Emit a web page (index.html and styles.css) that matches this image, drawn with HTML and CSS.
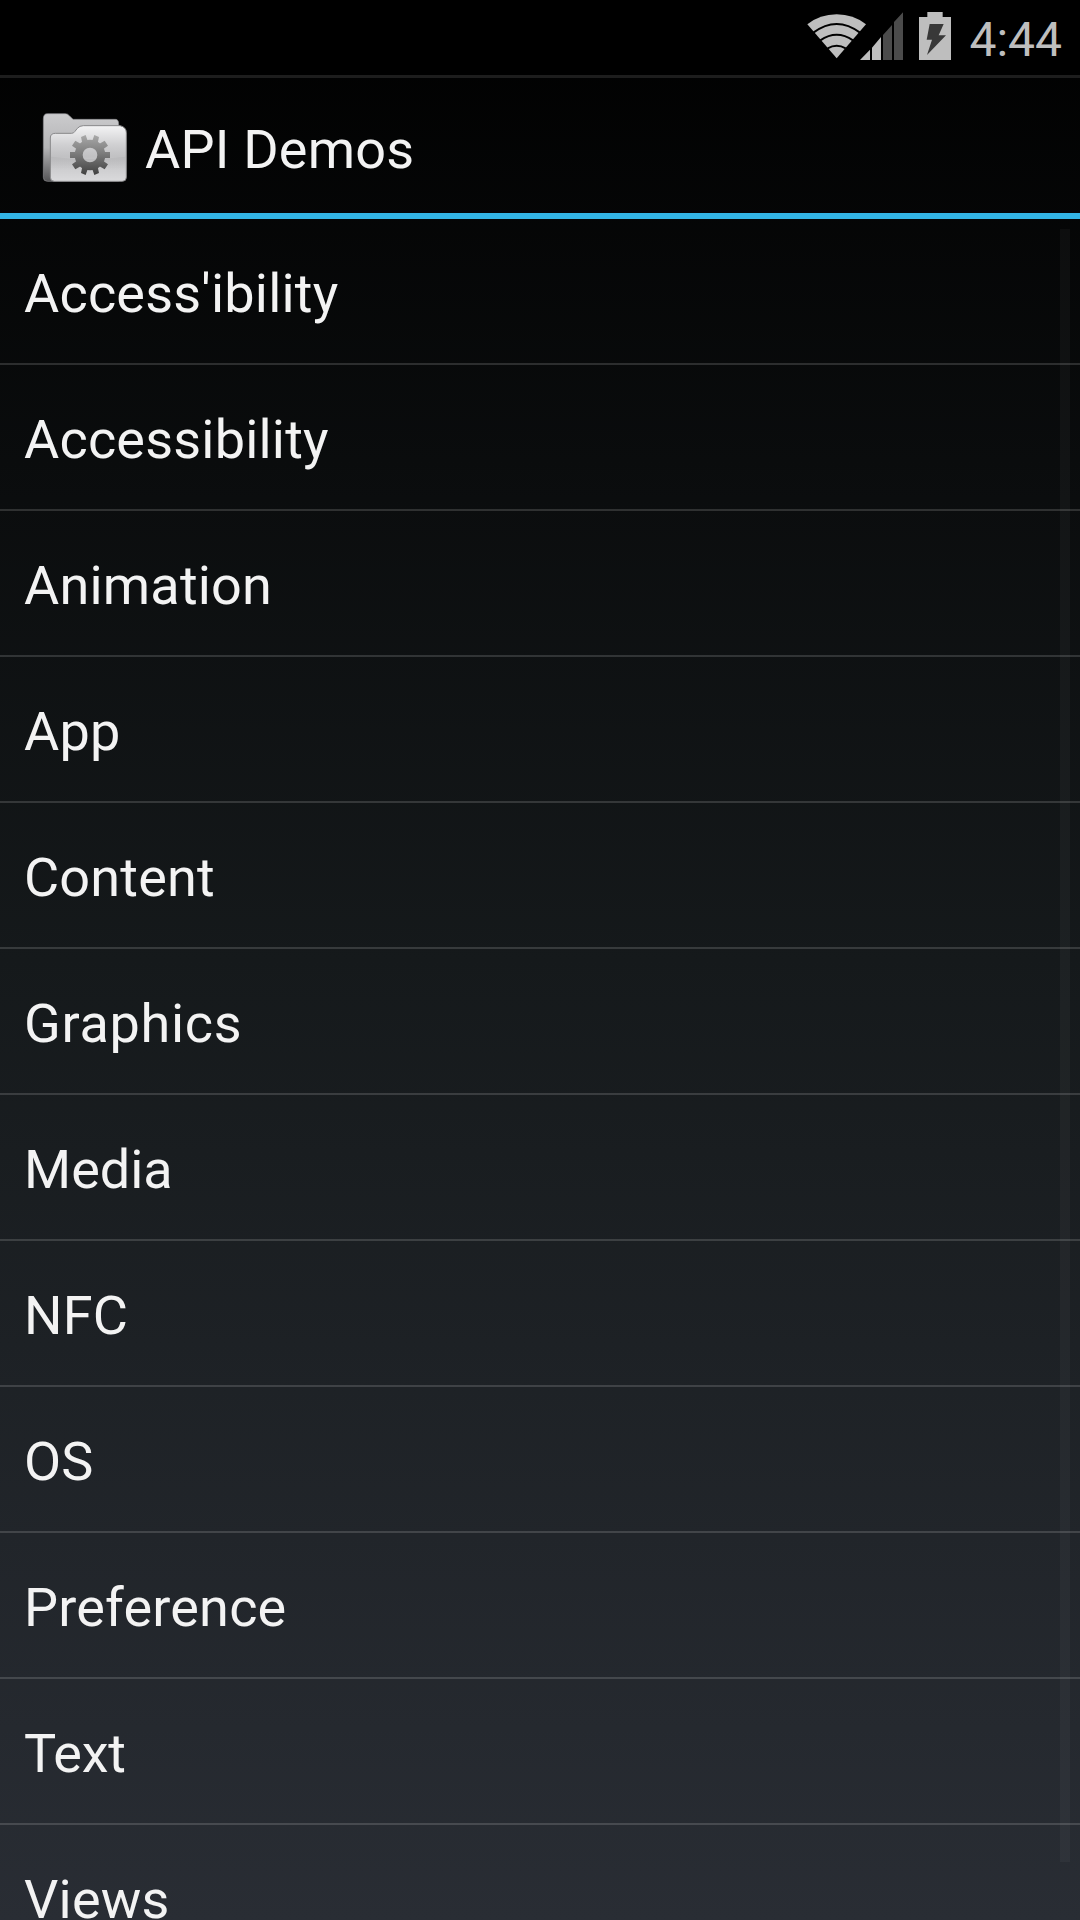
FILE: index.html
```html
<!DOCTYPE html>
<html lang="en">
<head>
<meta charset="utf-8">
<title>API Demos</title>
<link rel="stylesheet" href="styles.css">
</head>
<body>
<div class="screen">
  <header class="status-bar">
    <svg class="status-icons" viewBox="0 0 480 225" aria-hidden="true">
      <path fill="#bebebe" d="M52 73Q90 43 140 43T228 73L140 175Z"/>
      <g fill="none" stroke="#000" stroke-width="6">
        <path d="M70 98Q140 46 210 98"/>
        <path d="M91 121Q140 88 189 121"/>
        <path d="M113 145Q140 130 167 145"/>
      </g>
      <path fill="#bebebe" d="M210 180L240 149V180ZM246 143L273 111V180H246Z"/>
      <path fill="#4b4b4b" d="M279 105L306 75V180H279ZM312 66L339 37V180H312Z"/>
      <path fill="#bebebe" d="M412 36H458V51H483V180H387V51H412Z"/>
      <path fill="#383838" d="M419 72H461L446 106H468L411 165L426 119H410Z"/>
    </svg>
    <span class="clock">4:44</span>
  </header>
  <div class="action-bar">
    <svg class="app-icon" viewBox="0 0 330 285" aria-hidden="true">
      <defs>
        <linearGradient id="back" x1="0" y1="0" x2="0" y2="1">
          <stop offset="0" stop-color="#cbcbcd"/><stop offset=".5" stop-color="#b5b5b7"/><stop offset="1" stop-color="#555557"/>
        </linearGradient>
        <linearGradient id="front" x1="0" y1="0" x2="0" y2="1">
          <stop offset="0" stop-color="#f4f4f5"/><stop offset=".35" stop-color="#cfcfd1"/><stop offset=".55" stop-color="#c1c1c3"/><stop offset="1" stop-color="#dadadc"/>
        </linearGradient>
        <linearGradient id="sheen" x1="0" y1="0" x2="0" y2="1">
          <stop offset="0" stop-color="#b2b2b4"/><stop offset="1" stop-color="#b2b2b4" stop-opacity="0"/>
        </linearGradient>
        <linearGradient id="gear" gradientUnits="userSpaceOnUse" x1="0" y1="-60" x2="0" y2="60">
          <stop offset="0" stop-color="#a9a9a9"/><stop offset=".45" stop-color="#7d7d7d"/><stop offset="1" stop-color="#404040"/>
        </linearGradient>
      </defs>
      <path fill="url(#back)" stroke="#8d8d8f" stroke-width="2" d="M40 57Q40 41 52 41H106Q113 41 118 47L129 58H256Q266 58 266 72V244H52Q40 244 40 232Z"/>
      <path fill="url(#front)" stroke="#88888a" stroke-width="3" d="M61 114Q61 100 76 100H125Q131 100 135 94L142 85Q149 77 160 77H270Q289 81 289 98V232Q289 244 277 244H73Q61 244 61 232Z"/>
      <path fill="url(#sheen)" opacity=".55" d="M63 170Q175 184 287 170V210H63Z"/>
      <g transform="translate(180 165)" fill="url(#gear)">
        <path fill-rule="evenodd" d="M-46 0A46 46 0 1 0 46 0A46 46 0 1 0-46 0M-22 0A22 22 0 1 1 22 0A22 22 0 1 1-22 0"/>
        <path d="M-60-9H-40V9H-60ZM60-9H40V9H60Z"/>
        <path d="M-54-28L-44-43L-27-33L-39-17ZM54-28L44-43L27-33L39-17ZM-54 28L-44 43L-27 33L-39 17ZM54 28L44 43L27 33L39 17Z"/>
        <path d="M-27-54L-13-60L-6-40L-23-35ZM27-54L13-60L6-40L23-35ZM-27 54L-13 60L-6 40L-23 35ZM27 54L13 60L6 40L23 35Z"/>
      </g>
    </svg>
    <h1 class="title">API Demos</h1>
  </div>
  <main class="content">
    <ul class="list">
      <li class="item">Access'ibility</li>
      <li class="item">Accessibility</li>
      <li class="item">Animation</li>
      <li class="item">App</li>
      <li class="item">Content</li>
      <li class="item item-wide">Graphics</li>
      <li class="item item-plain">Media</li>
      <li class="item">NFC</li>
      <li class="item">OS</li>
      <li class="item">Preference</li>
      <li class="item item-tight">Text</li>
      <li class="item">Views</li>
    </ul>
    <div class="scrollbar"></div>
  </main>
</div>
</body>
</html>
```
FILE: styles.css
```css
* {
  box-sizing: border-box;
}

body {
  margin: 0;
  background: #000;
  font-family: Roboto, sans-serif;
  color: #f3f3f3;
}

.screen {
  display: flex;
  flex-direction: column;
  width: 1080px;
  height: 1920px;
  overflow: hidden;
  background: linear-gradient(#000, #15191b 50%, #292d34);
}

.status-bar {
  display: flex;
  flex: none;
  justify-content: flex-end;
  height: 75px;
  padding-right: 18px;
  background: #000;
}

.status-icons {
  width: 160px;
  height: 75px;
  margin-right: 19px;
  overflow: visible;
}

.clock {
  font-size: 48px;
  line-height: 80px;
  color: #bebebe;
}

.action-bar {
  display: flex;
  flex: none;
  align-items: center;
  height: 144px;
  padding-left: 30px;
  border-top: 3px solid #1d1d1d;
  border-bottom: 6px solid #33b5e5;
}

.app-icon {
  width: 110px;
  height: 95px;
  margin: 4px 5px 0 0;
}

.title {
  margin: 0;
  padding-top: 8px;
  font-size: 54px;
  font-weight: 400;
  line-height: 64px;
  letter-spacing: 0.2px;
}

.content {
  position: relative;
  flex: 1;
  min-height: 0;
  overflow: hidden;
}

.list {
  margin: 0;
  padding: 0;
  list-style: none;
}

.item {
  height: 146px;
  padding: 5px 24px 0;
  border-bottom: 2px solid rgba(255, 255, 255, 0.15);
  font-size: 54px;
  line-height: 139px;
  letter-spacing: 0.2px;
}

.item-wide {
  letter-spacing: 0.7px;
}

.item-plain {
  letter-spacing: 0;
}

.item-tight {
  letter-spacing: -0.3px;
}

.scrollbar {
  position: absolute;
  top: 10px;
  right: 10px;
  width: 10px;
  height: 1633px;
  background: rgba(255, 255, 255, 0.035);
}
```
